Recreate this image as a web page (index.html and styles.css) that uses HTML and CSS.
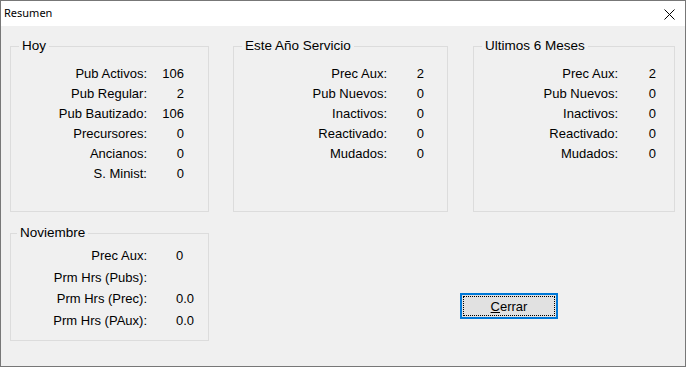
FILE: index.html
```html
<!doctype html>
<html>
    <head>
        <title>Resumen</title>
        <link rel="stylesheet" href="styles.css">
    </head>
    <body>
        <div class="window">

            <div class="titlebar">
                <span class="title">Resumen</span>
                <svg class="close" width="11" height="11" viewBox="0 0 11 11">
                    <path d="M0.5 0.5 L10.5 10.5 M10.5 0.5 L0.5 10.5" stroke="#000" stroke-width="1"/>
                </svg>
            </div>

            <div class="client">
                <div class="top_row">
                    <fieldset class="group group_hoy">
                        <legend>Hoy</legend>
                        <div class="rows">
                            <span>Pub Activos:</span><span>106</span>
                            <span>Pub Regular:</span><span>2</span>
                            <span>Pub Bautizado:</span><span>106</span>
                            <span>Precursores:</span><span>0</span>
                            <span>Ancianos:</span><span>0</span>
                            <span>S. Minist:</span><span>0</span>
                        </div>
                    </fieldset>

                    <fieldset class="group group_ano">
                        <legend>Este Año Servicio</legend>
                        <div class="rows">
                            <span>Prec Aux:</span><span>2</span>
                            <span>Pub Nuevos:</span><span>0</span>
                            <span>Inactivos:</span><span>0</span>
                            <span>Reactivado:</span><span>0</span>
                            <span>Mudados:</span><span>0</span>
                        </div>
                    </fieldset>

                    <fieldset class="group group_meses">
                        <legend>Ultimos 6 Meses</legend>
                        <div class="rows">
                            <span>Prec Aux:</span><span>2</span>
                            <span>Pub Nuevos:</span><span>0</span>
                            <span>Inactivos:</span><span>0</span>
                            <span>Reactivado:</span><span>0</span>
                            <span>Mudados:</span><span>0</span>
                        </div>
                    </fieldset>
                </div>

                <div class="bottom_row">
                    <fieldset class="group group_mes">
                        <legend>Noviembre</legend>
                        <div class="rows">
                            <span>Prec Aux:</span><span class="n1">0</span>
                            <span>Prm Hrs (Pubs):</span><span></span>
                            <span>Prm Hrs (Prec):</span><span>0.0</span>
                            <span>Prm Hrs (PAux):</span><span>0.0</span>
                        </div>
                    </fieldset>
                    <button class="btn_cerrar"><u>C</u>errar</button>
                </div>
            </div>

        </div>
    </body>
</html>
```

FILE: styles.css
```css
html, body {
    margin: 0;
    padding: 0;
    background: #f0f0f0;
}
.window {
    width: 686px;
    height: 367px;
    box-sizing: border-box;
    border: 1px solid #777777;
    background: #f0f0f0;
    display: flex;
    flex-direction: column;
    font-family: "Liberation Sans", Arial, sans-serif;
    font-size: 13px;
    color: #000;
}
.titlebar {
    height: 25px;
    background: #ffffff;
    display: flex;
    align-items: center;
    justify-content: space-between;
    padding: 0 10px 0 3px;
    flex-shrink: 0;
}
.title {
    font-family: "Noto Sans", sans-serif;
    font-size: 11px;
    line-height: 16px;
    margin-top: -1px;
}
.close {
    display: block;
    margin-top: 1px;
}
.client {
    flex: 1;
    padding: 12px 0 0 9px;
}
.top_row {
    display: flex;
    gap: 24px;
}
.bottom_row {
    display: flex;
    margin-top: 13px;
}
.group {
    margin: 0;
    padding: 0;
    border: 1px solid #dcdcdc;
    min-width: 0;
}
.group legend {
    margin-left: 8px;
    padding: 0 3px;
    font-size: 13.5px;
    line-height: 16px;
}
.group_hoy { width: 199px; box-sizing: border-box; }
.group_ano { width: 215px; box-sizing: border-box; }
.group_meses { width: 202px; box-sizing: border-box; margin-left: 1px; }
.group_mes { width: 199px; box-sizing: border-box; }
.group_mes legend { margin-left: 6px; }

.rows {
    display: grid;
    grid-auto-rows: 20px;
    line-height: 20px;
    padding: 10px 0 27px 0;
}
.rows span {
    text-align: right;
    white-space: nowrap;
}
.group_hoy .rows { grid-template-columns: 136px 37px; }
.group_ano .rows { grid-template-columns: 153px 37px; }
.group_meses .rows { grid-template-columns: 144px 38px; }
.group_mes .rows {
    grid-template-columns: 136px 60px;
    grid-auto-rows: 21.5px;
    line-height: 21.5px;
    padding: 4px 0 9px 0;
}
.group_mes .rows span:nth-child(2n) {
    text-align: left;
    padding-left: 29px;
}
.group_mes .rows .n1 {
    padding-left: 28px;
}
.btn_cerrar {
    width: 98px;
    height: 26px;
    margin: 68px 0 0 251px;
    background: #e1e1e1;
    border: 2px solid #0078d7;
    outline: 1px dotted #000;
    outline-offset: -4px;
    font-family: "Liberation Sans", Arial, sans-serif;
    font-size: 13px;
    color: #000;
    padding: 0;
}
```
